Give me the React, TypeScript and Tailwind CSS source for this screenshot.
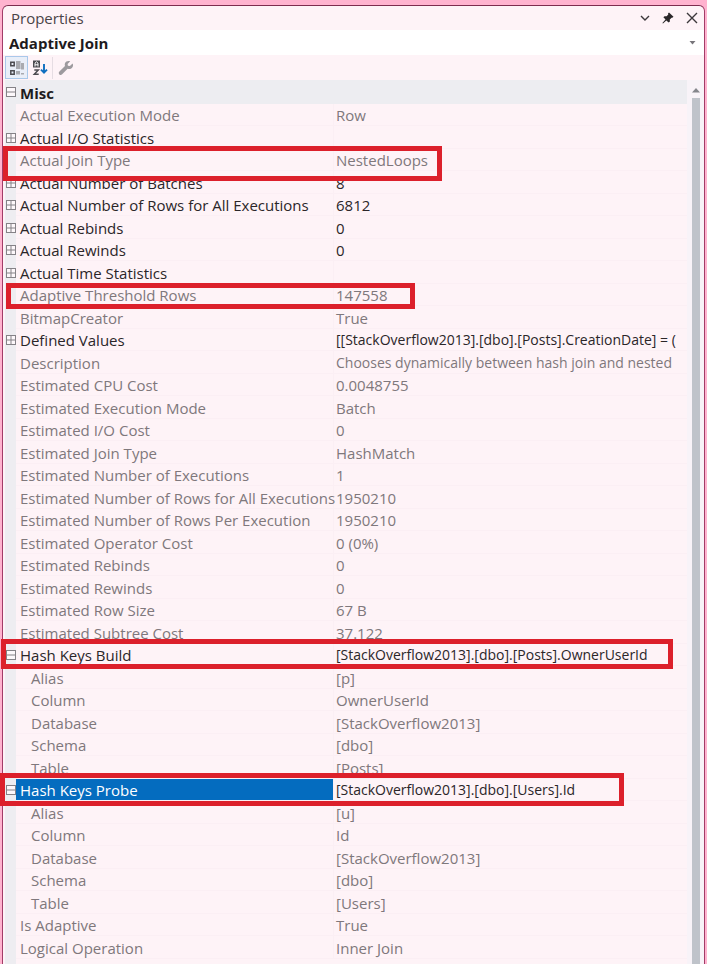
import React, { useState } from "react";
import { clsx } from "clsx";

type Row = {
  name: string;
  value?: string;
  kind?: "plain" | "closed" | "open";
  child?: boolean;
  selected?: boolean;
  mark?: string;
};

const rows: Row[] = [
  { name: "Actual Execution Mode", value: "Row" },
  { name: "Actual I/O Statistics", kind: "closed" },
  { name: "Actual Join Type", value: "NestedLoops", mark: "-left-[2px] -top-[3px] h-[35px] w-[439px]" },
  { name: "Actual Number of Batches", value: "8", kind: "closed" },
  { name: "Actual Number of Rows for All Executions", value: "6812", kind: "closed" },
  { name: "Actual Rebinds", value: "0", kind: "closed" },
  { name: "Actual Rewinds", value: "0", kind: "closed" },
  { name: "Actual Time Statistics", kind: "closed" },
  { name: "Adaptive Threshold Rows", value: "147558", mark: "left-[1px] -top-[1px] h-[26px] w-[409px]" },
  { name: "BitmapCreator", value: "True" },
  { name: "Defined Values", value: "[[StackOverflow2013].[dbo].[Posts].CreationDate] = (", kind: "closed" },
  { name: "Description", value: "Chooses dynamically between hash join and nested" },
  { name: "Estimated CPU Cost", value: "0.0048755" },
  { name: "Estimated Execution Mode", value: "Batch" },
  { name: "Estimated I/O Cost", value: "0" },
  { name: "Estimated Join Type", value: "HashMatch" },
  { name: "Estimated Number of Executions", value: "1" },
  { name: "Estimated Number of Rows for All Executions", value: "1950210" },
  { name: "Estimated Number of Rows Per Execution", value: "1950210" },
  { name: "Estimated Operator Cost", value: "0 (0%)" },
  { name: "Estimated Rebinds", value: "0" },
  { name: "Estimated Rewinds", value: "0" },
  { name: "Estimated Row Size", value: "67 B" },
  { name: "Estimated Subtree Cost", value: "37.122" },
  {
    name: "Hash Keys Build",
    value: "[StackOverflow2013].[dbo].[Posts].OwnerUserId",
    kind: "open",
    mark: "-left-[4px] -top-[5px] h-[30px] w-[672px]",
  },
  { name: "Alias", value: "[p]", child: true },
  { name: "Column", value: "OwnerUserId", child: true },
  { name: "Database", value: "[StackOverflow2013]", child: true },
  { name: "Schema", value: "[dbo]", child: true },
  { name: "Table", value: "[Posts]", child: true },
  {
    name: "Hash Keys Probe",
    value: "[StackOverflow2013].[dbo].[Users].Id",
    kind: "open",
    selected: true,
    mark: "-left-[5px] -top-[6px] h-[33px] w-[624px]",
  },
  { name: "Alias", value: "[u]", child: true },
  { name: "Column", value: "Id", child: true },
  { name: "Database", value: "[StackOverflow2013]", child: true },
  { name: "Schema", value: "[dbo]", child: true },
  { name: "Table", value: "[Users]", child: true },
  { name: "Is Adaptive", value: "True" },
  { name: "Logical Operation", value: "Inner Join" },
];

export default function App() {
  const [sort, setSort] = useState<"category" | "name">("category");

  return (
    <div className="flex min-h-screen flex-col bg-[#ffb3cf] px-[2px] pt-[5px] font-['Open_Sans','Noto_Sans',sans-serif] text-[15px] leading-5 text-[#2b2629]">
      <section className="flex grow flex-col rounded-t-md border border-b-0 border-[#a23c68] border-t-[#7d2c4e] bg-[#fef3f7]">
        <header className="flex h-6 items-center justify-between pr-[6px] pl-2">
          <h1 className="text-[#4a4447]">Properties</h1>
          <div className="flex items-center gap-3">
            <button aria-label="Window position">
              <ChevronIcon />
            </button>
            <button aria-label="Auto hide">
              <PinIcon />
            </button>
            <button aria-label="Close">
              <CloseIcon />
            </button>
          </div>
        </header>

        <div className="flex h-[25px] items-center bg-white pr-2">
          <select
            aria-label="Object"
            className="grow appearance-none bg-transparent pl-[6px] font-bold text-[#1e1b1d] outline-none"
          >
            <option>Adaptive Join</option>
          </select>
          <svg width="7" height="4" viewBox="0 0 7 4" className="pointer-events-none">
            <path d="M0.5 0h6l-3 3.5z" fill="#77757a" />
          </svg>
        </div>

        <div className="flex h-[25px] items-center pl-[2px]">
          <button
            aria-label="Categorized"
            aria-pressed={sort === "category"}
            onClick={() => setSort("category")}
            className="flex h-[23px] w-[23px] items-center justify-center border border-[#a9c8ea] bg-[#e9eef8]"
          >
            <CategoryIcon />
          </button>
          <button
            aria-label="Alphabetical"
            aria-pressed={sort === "name"}
            onClick={() => setSort("name")}
            className="flex h-[23px] w-[23px] items-center justify-center"
          >
            <SortIcon />
          </button>
          <span className="mx-[1px] h-[22px] w-px bg-[#e6dde3]" />
          <button aria-label="Property pages" className="flex h-[23px] w-6 items-center justify-center">
            <WrenchIcon />
          </button>
        </div>

        <div className="flex grow pl-[2px]">
          <div className="flex min-w-0 grow flex-col">
            <table className="w-full table-fixed border-separate border-spacing-0">
              <colgroup>
                <col className="w-[11px]" />
                <col className="w-[318px]" />
                <col />
              </colgroup>
              <thead>
                <tr className="h-6 bg-[#ededf1]">
                  <th className="p-0 pl-[1px]">
                    <Expander open label="Misc" />
                  </th>
                  <th colSpan={2} className="p-0 pt-[1px] pl-[4px] text-left font-bold text-[#1e1b1d]">
                    Misc
                  </th>
                </tr>
              </thead>
              <tbody>
                {rows.map((row, i) => (
                  <PropertyRow key={i} row={row} />
                ))}
              </tbody>
            </table>
            <div className="w-[11px] grow bg-[#eeedf1]" />
          </div>
          <div className="flex w-[17px] shrink-0 flex-col items-center bg-[#f8f3f8] pt-2">
            <svg width="8" height="5" viewBox="0 0 8 5">
              <path d="M0 4.5L4 0l4 4.5z" fill="#85868c" />
            </svg>
            <div className="mt-[5px] w-2 grow bg-[#bfc3ca]" />
          </div>
        </div>
      </section>
    </div>
  );
}

function PropertyRow({ row }: { row: Row }) {
  const { name, value = "", kind = "plain", child, selected, mark } = row;
  const color = kind === "plain" ? "text-[#7f787c]" : "text-[#2b2629]";

  return (
    <tr className="odd:h-[22px] even:h-[23px]">
      <td className="relative bg-[#eeedf1] p-0 pl-[1px]">
        {kind !== "plain" && <Expander open={kind === "open"} label={name} />}
        {mark && <span className={clsx("pointer-events-none absolute z-10 border-5 border-[#dc202b]", mark)} />}
      </td>
      <th
        scope="row"
        className={clsx(
          "border-r border-b border-[#fbeff4] p-0 pt-[1px] text-left font-normal whitespace-nowrap",
          child ? "pl-[15px]" : "pl-[4px]",
          selected ? "bg-[#046cbf] text-white" : color
        )}
      >
        {name}
      </th>
      {/* long values go one size down so they fit the column */}
      <td
        className={clsx(
          "overflow-hidden border-b border-[#fbeff4] p-0 pt-[1px] pl-[2px] whitespace-nowrap",
          value.length > 30 && "text-[14px]",
          color
        )}
      >
        {value}
      </td>
    </tr>
  );
}

function Expander({ open, label }: { open: boolean; label: string }) {
  return (
    <button aria-label={label} aria-expanded={open} className="block">
      <svg width="10" height="10" viewBox="0 0 10 10" fill="none" stroke="#858287">
        <rect x="0.5" y="0.5" width="9" height="9" fill="#fdf8fb" />
        <path d="M1 5h8" />
        {!open && <path d="M5 1v8" />}
      </svg>
    </button>
  );
}

const ChevronIcon = () => (
  <svg width="10" height="10" viewBox="0 0 10 10" fill="none" stroke="#3c383b" strokeWidth="1.4">
    <path d="M1 3l4 4 4-4" />
  </svg>
);

const PinIcon = () => (
  <svg width="12" height="12" viewBox="0 0 12 12" fill="#2a2729">
    <path d="M7 0.5l4.5 4.3-1.2 1-0.7-0.1-1.8 1.8 0.1 1.9-1.2 1.1L4.3 8.4 1 11.6l-0.6-0.5L3.5 7.6 1.4 5.3l1.1-1.1 2.1 0.1L6.3 2.5 6 1.5z" />
  </svg>
);

const CloseIcon = () => (
  <svg width="12" height="12" viewBox="0 0 12 12" fill="none" stroke="#3c383b" strokeWidth="1.4">
    <path d="M1 1l10 10M11 1L1 11" />
  </svg>
);

const CategoryIcon = () => (
  <svg width="16" height="16" viewBox="0 0 16 16" fill="none" className="shrink-0">
    <path d="M1.8 2.3h3.4v3.4H1.8zM1.8 10.8h3.4v3.4H1.8z" stroke="#4c4b50" strokeWidth="1.5" />
    <path d="M7 1h4.5v8H7zM12 3h3v6.5h-3zM7 11h4v3.5H7zM12 13h3v1.5h-3z" fill="#a9aab0" />
  </svg>
);

const SortIcon = () => (
  <svg width="16" height="16" viewBox="0 0 16 16" fill="none">
    <path d="M1 0.5h7v7H1z" fill="#4c4b50" />
    <path d="M3 6.5V3.2l1.5-1.4L6 3.2v3.3M3 4.8h3" stroke="#fff" strokeWidth="1" />
    <path d="M2.3 10h4l-4 4.3h4.4" stroke="#4c4b50" strokeWidth="1.5" />
    <path d="M12 4v8.5M9 9.6l3 3 3-3" stroke="#0f6fc0" strokeWidth="1.9" />
  </svg>
);

const WrenchIcon = () => (
  <svg width="16" height="16" viewBox="0 0 16 16">
    <path
      d="M14.6 3.5l-2.7 2.6-2-0.3-0.3-1.9 2.6-2.7C10 0.4 7.8 1.2 7 3.2 6.6 4.2 6.7 5.2 7 6.1L1.2 11.8c-1.4 1.6 0.9 4.2 2.7 2.8L9.6 8.8c2 0.7 4.3-0.1 5.1-2.1 0.5-1.1 0.4-2.2-0.1-3.2z"
      fill="#9d9a9e"
    />
  </svg>
);
